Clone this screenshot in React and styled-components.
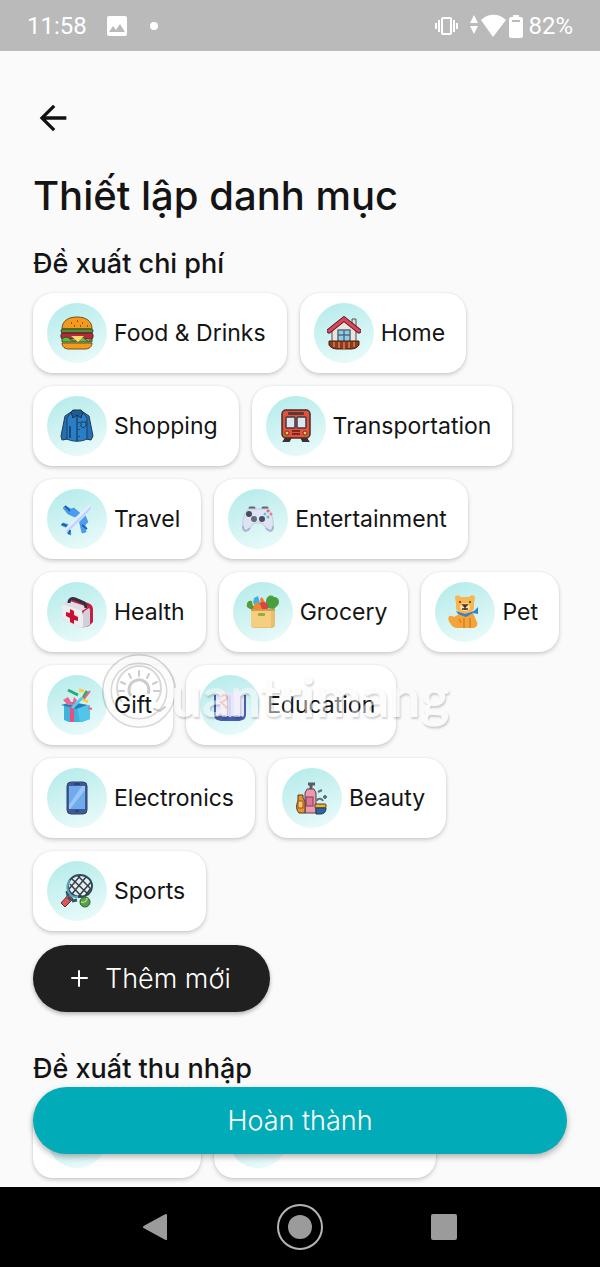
import styled, { createGlobalStyle } from 'styled-components';

const GlobalStyle = createGlobalStyle`
  * {
    box-sizing: border-box;
  }
  body {
    margin: 0;
    background: #fafafa;
    font-family: Inter, 'Liberation Sans', sans-serif;
    color: #141414;
  }
  svg {
    display: block;
    flex-shrink: 0;
  }
  button {
    font-family: inherit;
    border: none;
    cursor: pointer;
  }
`;

const Screen = styled.div`
  min-height: 100vh;
  display: flex;
  flex-direction: column;
`;

const StatusBar = styled.header`
  height: 51px;
  padding: 0 27px;
  display: flex;
  align-items: center;
  justify-content: space-between;
  background: #bababa;
  color: #fff;
  font-family: Roboto, sans-serif;
  font-size: 24px;
  font-weight: 400;
`;

const StatusGroup = styled.div`
  display: flex;
  align-items: center;
  gap: ${(props) => props.$gap}px;
`;

const Main = styled.main`
  position: relative;
  flex: 1;
  padding: 47px 33px 9px;
`;

const BackButton = styled.button`
  display: block;
  padding: 0;
  background: none;
  color: #111;
`;

const Title = styled.h1`
  margin: 34px 0 28px;
  font-size: 40px;
  line-height: 48px;
  font-weight: 450;
`;

const Section = styled.section`
  margin-bottom: ${(props) => (props.$last ? 0 : 41)}px;
`;

const SectionTitle = styled.h2`
  margin: 0 0 13px;
  font-size: 27px;
  line-height: 32px;
  font-weight: 450;
`;

const ChipList = styled.div`
  display: flex;
  flex-wrap: wrap;
  gap: 13px;
  margin-bottom: ${(props) => (props.$last ? 0 : 14)}px;
`;

const Chip = styled.button`
  display: flex;
  align-items: center;
  gap: 7px;
  height: 80px;
  min-width: ${(props) => props.$minWidth || 0}px;
  padding: 0 21px 0 14px;
  border-radius: 20px;
  background: #fff;
  box-shadow: 0 2px 4px rgba(0, 0, 0, 0.18), 0 0 2px rgba(0, 0, 0, 0.08);
  color: #141414;
  font-size: 23px;
`;

const IconCircle = styled.span`
  display: flex;
  align-items: center;
  justify-content: center;
  width: 60px;
  height: 60px;
  border-radius: 50%;
  background: linear-gradient(160deg, #b2ebea 0%, #cdf2f1 45%, #effcfc 100%);
`;

const AddButton = styled.button`
  display: flex;
  align-items: center;
  gap: 12px;
  height: 67px;
  padding: 0 39px 0 33px;
  border-radius: 34px;
  background: #202020;
  box-shadow: 0 2px 4px rgba(0, 0, 0, 0.3);
  color: #fff;
  font-size: 27px;
  font-weight: 350;
`;

const DoneButton = styled.button`
  position: absolute;
  left: 33px;
  right: 33px;
  bottom: 33px;
  height: 67px;
  border-radius: 34px;
  background: #02abb8;
  box-shadow: 0 3px 6px rgba(0, 0, 0, 0.3);
  color: #fff;
  font-size: 27px;
  font-weight: 350;
`;

const Watermark = styled.div`
  position: absolute;
  top: 602px;
  left: 101px;
  display: flex;
  align-items: center;
  pointer-events: none;
  opacity: 0.5;
`;

const WatermarkText = styled.span`
  margin-left: -6px;
  padding-top: 10px;
  font-family: Lato, sans-serif;
  font-size: 55px;
  line-height: 66px;
  font-weight: 700;
  color: #fafafa;
  text-shadow: 1px 2px 2px rgba(0, 0, 0, 0.35);
`;

const NavBar = styled.nav`
  height: 80px;
  display: flex;
  align-items: center;
  justify-content: center;
  gap: 96px;
  background: #000;
`;

const NavButton = styled.button`
  display: flex;
  padding: 0;
  background: none;
`;

const Burger = () => (
  <>
    <path d="M2 13C2 5 8 1 17 1s15 4 15 12z" fill="#f39a1d" stroke="#70501c" />
    <path d="M11 7h1M17 5h1M22 7h1M14 10h1M20 10h1M27 10h1" stroke="#704016" strokeWidth="1.5" />
    <rect x="1" y="13" width="32" height="4" rx="2" fill="#55903c" stroke="#294723" />
    <rect x="1" y="17" width="32" height="6" rx="2" fill="#b72936" stroke="#5f1d26" />
    <path d="M2 23q4-4 8 0t8 0 7 0 7 0v3H2z" fill="#62b845" stroke="#2d5824" />
    <path d="M11 20h13l-6 6z" fill="#ffd66a" />
    <path d="M2 27h30c0 4-3 6-7 6H9c-4 0-7-2-7-6z" fill="#f59a19" stroke="#70501c" />
  </>
);

const House = () => (
  <>
    <path d="M25 3h4v10h-4z" fill="#d7dce1" stroke="#555" />
    <path d="M5 14 17 4l12 10v14H5z" fill="#eee2dc" stroke="#514b4b" />
    <path d="M2 15 17 3l15 12" fill="none" stroke="#5b202c" strokeWidth="5" strokeLinecap="round" />
    <path d="M2 15 17 3l15 12" fill="none" stroke="#df4557" strokeWidth="3" strokeLinecap="round" />
    <rect x="11" y="14" width="12" height="12" fill="#8dcced" stroke="#536e7c" strokeWidth="1.5" />
    <path d="M17 14v12M11 19h12" stroke="#536e7c" strokeWidth="1.5" />
    <path d="M2 25h30v4c-2 3-5 4-8 4H10c-4 0-7-2-8-4z" fill="#873b20" stroke="#422015" />
    <path d="M7 26v5M12 26v6M17 26v7M22 26v6M27 26v5" stroke="#d26836" strokeWidth="2" />
  </>
);

const Shirt = () => (
  <>
    <path d="m11 3-6 4-4 20 1 4 6-1 2-16zM23 3l6 4 4 20-2 4-5-1-2-16z" fill="#2170b8" stroke="#25394e" />
    <path d="m11 3 6 4 6-4 4 6v21c-6 3-14 3-20 0V9z" fill="#287fc8" stroke="#233f58" />
    <path d="m11 3 2-2h8l2 2-2 6-4-3-4 3z" fill="#1c5c99" stroke="#1d3043" />
    <path d="M17 7v25" stroke="#17476f" strokeWidth="1.5" />
    <path d="M19 13v1M19 20v1M19 27v1M10 17v12" stroke="#173c5a" strokeWidth="1.5" />
    <path d="M21 13h5v4l-3 2-2-2z" fill="#2f86cc" stroke="#173c5a" />
  </>
);

const Bus = () => (
  <>
    <path d="m8 27-3 5h5l2-4M26 27l3 5h-5l-2-4" fill="#333" stroke="#333" strokeWidth="2" />
    <rect x="3" y="1" width="28" height="28" rx="4" fill="#e4503a" stroke="#472d2b" strokeWidth="1.5" />
    <rect x="9" y="3" width="16" height="3" rx="1" fill="#5b3833" />
    <rect x="7" y="8" width="9" height="11" rx="1" fill="#dce6f0" stroke="#423c40" strokeWidth="1.5" />
    <rect x="18" y="8" width="9" height="11" rx="1" fill="#dce6f0" stroke="#423c40" strokeWidth="1.5" />
    <circle cx="8" cy="24" r="2" fill="#ffd647" stroke="#5d3424" />
    <circle cx="26" cy="24" r="2" fill="#ffd647" stroke="#5d3424" />
    <path d="M13 22h8M13 25h8" stroke="#7e2723" strokeWidth="2" />
  </>
);

const Plane = () => (
  <>
    <path d="m15 15-7-3-5-6 2-2 6 3 3-1 7 6zM19 18l3 13 4-1-1-7 3-3-4-9zM7 26l-6-3 2-2 7 2zM10 27l1 6-3-1-2-6z" fill="#4b9df1" stroke="#3278c5" strokeWidth="0.5" />
    <path d="m7 24 20-20c2-2 5-2 5 0 0 2-1 4-3 6L11 28c-3 2-6 3-7 2 0-2 1-4 3-6z" fill="#e0ecff" />
    <path d="m5 30 26-26c1 2-1 4-3 6L10 28c-2 1-4 2-5 2z" fill="#bbd4fb" />
    <path d="m5 4 5 5M27 27l-5-4M2 22l5 2M9 32l1-4" stroke="#1764b5" strokeWidth="2" />
  </>
);

const Gamepad = () => (
  <>
    <path d="M9 6h4M22 6h4" stroke="#626778" strokeWidth="3" strokeLinecap="round" />
    <path d="M7 7h21c4 7 5 15 4 20-2 3-5 2-7-1l-4-5h-8l-4 5c-2 4-6 3-7 0C1 19 3 11 7 7z" fill="#dde3f2" stroke="#c3cbe0" />
    <path d="M2 24c0 6 4 6 7 2M25 26c3 4 7 4 7-2" fill="none" stroke="#a6b3d2" strokeWidth="2" />
    <circle cx="8" cy="12" r="3" fill="#474c5c" />
    <circle cx="13" cy="17" r="3" fill="#626a7e" />
    <circle cx="21" cy="17" r="3" fill="#474c5c" />
    <circle cx="27" cy="9" r="1.5" fill="#ed6572" />
    <circle cx="24" cy="12" r="1.5" fill="#5cc9d8" />
    <circle cx="30" cy="12" r="1.5" fill="#ea7ba2" />
    <circle cx="27" cy="15" r="1.5" fill="#6cbcb4" />
  </>
);

const FirstAid = () => (
  <>
    <path d="M14 3l14 5c3 1 5 3 5 6v13l-4 4-8 2V15L10 7z" fill="#c71f42" />
    <path d="M2 11c0-2 2-4 4-4l4-1 18 6-6 4v17l-3-1-15-7c-2-1-2-2-2-4z" fill="#dcdde5" />
    <path d="M2 11c0-1 1-2 3-1l15 5c2 1 3 3 3 5v13l-3-1-15-7c-2-1-3-2-3-4z" fill="#ececf1" />
    <path d="M23 20c0-3 1-4 3-5l3-2c1 1 1 2 1 4v13l-7 3z" fill="#cfd0d9" />
    <path d="M9 8c0-4 3-5 6-4l7 3c3 1 4 3 4 6" fill="none" stroke="#34313d" strokeWidth="3" />
    <path d="M10 14l4 2v4l4 2v4l-4-1v4l-4-2v-4l-4-2v-4l4 1z" fill="#c9112f" />
  </>
);

const GroceryBag = () => (
  <>
    <path d="M1 12c-1-5 2-7 5-6 0 4 2 6 5 8H4z" fill="#5a9838" />
    <path d="m8 3 4-2 2 7-3 4-4-4z" fill="#42afde" />
    <path d="m14 4 2-2 6 10h-7z" fill="#f47b31" />
    <path d="M20 7c0-6 5-8 8-5 5 0 6 5 4 8l-4 4-9-1z" fill="#499f3d" />
    <circle cx="17" cy="12" r="5" fill="#de4242" />
    <path d="M9 8c4-1 6 2 7 6H7z" fill="#f2872c" />
    <path d="M5 14h24v15c0 3-1 4-4 4H9c-3 0-4-1-4-4z" fill="#eabe70" />
    <path d="M5 14h20v18H9c-3 0-4-1-4-4z" fill="#f6ce82" />
    <path d="M5 15h24" stroke="#d49c50" strokeWidth="2" />
    <rect x="12" y="18" width="7" height="3" rx="1" fill="#9cab38" />
  </>
);

const Dog = () => (
  <>
    <path d="M6 22c-6-4-7 2-4 6 2 4 5 5 8 5h16c3-1 4-3 3-6l-4-9H13z" fill="#f4a43b" />
    <path d="M16 23v10M22 23v10M11 24l2 4" stroke="#d98022" strokeWidth="1.5" />
    <path d="M7 3c0-4 4-3 6-1h8c3-3 6-2 6 1l-1 5v6c-3 6-15 6-18 0V8z" fill="#f9b64c" />
    <ellipse cx="17" cy="12" rx="5" ry="4" fill="#ffe1a3" />
    <path d="M12 6v2M22 6v2M15 10h4l-2 2zM17 12v3M14 14h6" fill="#443238" stroke="#443238" strokeWidth="1.5" />
    <path d="m8 16 9 3 9-3 4-4v7l-5-1-7 4-8-3z" fill="#3482cf" />
  </>
);

const Gift = () => (
  <>
    <path d="m4 17 13 3 13-3v14l-8 3H9l-5-2z" fill="#3fb3dc" />
    <path d="m17 20 13-3v14l-10 3z" fill="#4fc6ea" />
    <path d="m1 17 11-3 16 3-12 4z" fill="#277fb8" />
    <path d="M10 19v15h4V19" fill="#ed4d7c" />
    <path d="m8 17-5-5 5-3 5 8M12 17l2-8 3 3-3 5" fill="#ef658d" />
    <path d="m8 2 10 5M27 3l-4 7" stroke="#2eaa78" strokeWidth="3" />
    <path d="m19 2 5 1M20 10l8 4" stroke="#ffcb43" strokeWidth="3" />
    <path d="m30 3-6 8M28 20l4 1" stroke="#ed6281" strokeWidth="2" />
    <path d="m12 20 10-10" stroke="#55cdee" strokeWidth="3" />
  </>
);

const Book = () => (
  <>
    <path d="M1 7h32v19c0 5-3 7-9 7H10c-6 0-9-2-9-7z" fill="#4860a9" />
    <path d="M3 4c6-2 11-1 14 2v23c-4-2-9-2-13 0l-1-2zM31 4c-6-2-11-1-14 2v23c4-2 9-2 13 0l1-2z" fill="#e8e6fa" />
    <path d="M17 7v22" stroke="#c9c8ea" />
    <path d="M8 9c3-4 8-1 5 3l-5 2 6 6" fill="none" stroke="#e7a493" strokeWidth="2" />
  </>
);

const Phone = () => (
  <>
    <rect x="7" y="1" width="20" height="32" rx="4" fill="#405a96" stroke="#304471" />
    <path d="M9 5h16v23H9z" fill="#6fabed" />
    <path d="M25 5v4L10 28H9v-4L22 5z" fill="#99c6f3" />
    <path d="M14 3h6M15 30h4" stroke="#263d70" strokeWidth="1.5" />
  </>
);

const Cosmetics = () => (
  <>
    <path d="M13 3h7M16 2v6" fill="none" stroke="#5c5961" strokeWidth="3" />
    <path d="M12 8h7l2 4v20H10V12z" fill="#ec99aa" stroke="#594049" />
    <rect x="11" y="16" width="7" height="9" fill="#d87797" stroke="#823a61" />
    <path d="M3 14h5v3l2 3v12H4c-3-3-3-8-1-12z" fill="#e9942c" stroke="#54391d" />
    <rect x="3" y="20" width="5" height="7" fill="#ffc268" stroke="#8b5620" />
    <rect x="20" y="23" width="11" height="4" rx="1" fill="#efb432" stroke="#503b21" />
    <path d="M21 27h10c0 5-3 6-6 6h-4z" fill="#2b65a6" stroke="#253a53" />
    <path d="M22 20c0-3 5-3 6 0M23 11l4-2M30 14v4M28 16h4" fill="none" stroke="#59737a" strokeWidth="2" />
  </>
);

const Racket = () => (
  <>
    <path d="m9 20 4 5-8 8-4-4z" fill="#e85052" stroke="#49383b" />
    <path d="m8 22-1-5M12 27l5-1M8 23l3 3" fill="none" stroke="#31546b" strokeWidth="3" />
    <ellipse cx="20" cy="12" rx="12" ry="11" fill="#e6edee" stroke="#285062" strokeWidth="2" />
    <path d="M10 10 22 23M12 5l17 16M18 2l13 13M9 15 20 2M12 20 26 3M18 23 31 8M25 22l6-8" stroke="#353e48" strokeWidth="1.5" />
    <path d="M10 6C4 14 9 24 18 23" fill="none" stroke="#5ba7be" strokeWidth="2" />
    <circle cx="25" cy="28" r="5" fill="#54a348" stroke="#325933" />
    <path d="M21 28c4 1 6-1 6-4" fill="none" stroke="#b5d674" strokeWidth="1.5" />
  </>
);

const expenseCategories = [
  { name: 'Food & Drinks', Icon: Burger },
  { name: 'Home', Icon: House },
  { name: 'Shopping', Icon: Shirt },
  { name: 'Transportation', Icon: Bus },
  { name: 'Travel', Icon: Plane },
  { name: 'Entertainment', Icon: Gamepad },
  { name: 'Health', Icon: FirstAid },
  { name: 'Grocery', Icon: GroceryBag },
  { name: 'Pet', Icon: Dog },
  { name: 'Gift', Icon: Gift },
  { name: 'Education', Icon: Book },
  { name: 'Electronics', Icon: Phone },
  { name: 'Beauty', Icon: Cosmetics },
  { name: 'Sports', Icon: Racket },
];

const incomeWidths = [168, 222];

export default function App() {
  return (
    <>
      <GlobalStyle />
      <Screen>
        <StatusBar>
          <StatusGroup $gap={20}>
            <span>11:58</span>
            <svg width="20" height="20" viewBox="0 0 20 20">
              <rect width="20" height="20" rx="2" fill="#fff" />
              <path d="m2 16 4-6 3 4 4-6 5 8z" fill="#bababa" />
            </svg>
            <svg width="14" height="8" viewBox="0 0 14 8">
              <circle cx="7" cy="4" r="4" fill="#fff" />
            </svg>
          </StatusGroup>
          <StatusGroup $gap={5}>
            <svg width="89" height="24" viewBox="0 0 89 24" fill="#fff">
              <rect x="8" y="4" width="9" height="16" rx="1" fill="none" stroke="#fff" strokeWidth="2" />
              <path d="M4 6h2v12H4zM1 9h2v6H1zM19 6h2v12h-2zM22 9h2v6h-2z" />
              <path d="m40 1 4 8h-8zM40 20l4-8h-8z" />
              <path d="M47 6c7-7 18-7 25 0L59 23z" />
              <path d="M79 1h6v2h2c1 0 2 1 2 2v17c0 1-1 2-2 2H77c-1 0-2-1-2-2V5c0-1 1-2 2-2h2z" />
              <path d="M78 6h8v2h-8z" fill="#bababa" />
            </svg>
            <span>82%</span>
          </StatusGroup>
        </StatusBar>

        <Main>
          <BackButton aria-label="Quay lại">
            <svg width="40" height="40" viewBox="0 0 24 24">
              <path d="M20 11H7.8l5.6-5.6L12 4l-8 8 8 8 1.4-1.4L7.8 13H20z" fill="currentColor" />
            </svg>
          </BackButton>
          <Title>Thiết lập danh mục</Title>

          <Section>
            <SectionTitle>Đề xuất chi phí</SectionTitle>
            <ChipList>
              {expenseCategories.map(({ name, Icon }) => (
                <Chip key={name}>
                  <IconCircle>
                    <svg width="34" height="34" viewBox="0 0 34 34">
                      <Icon />
                    </svg>
                  </IconCircle>
                  {name}
                </Chip>
              ))}
            </ChipList>
            <AddButton>
              <svg width="27" height="27" viewBox="0 0 27 27">
                <path d="M13 6v15M6 13h15" stroke="#fff" strokeWidth="2" strokeLinecap="round" />
              </svg>
              Thêm mới
            </AddButton>
          </Section>

          <Section $last>
            <SectionTitle>Đề xuất thu nhập</SectionTitle>
            <ChipList $last>
              {incomeWidths.map((width) => (
                <Chip key={width} $minWidth={width}>
                  <IconCircle />
                </Chip>
              ))}
            </ChipList>
          </Section>

          <Watermark aria-hidden="true">
            <svg width="76" height="76" viewBox="0 0 76 76" fill="none">
              <circle cx="38" cy="38" r="32" stroke="#000" strokeOpacity="0.3" strokeWidth="10" />
              <circle cx="38" cy="38" r="32" stroke="#fafafa" strokeWidth="7" />
              <path d="M21 49a22 22 0 1 1 34 0" stroke="#000" strokeOpacity="0.3" strokeWidth="2" />
              <path d="M30 43a10 10 0 1 1 17-2" stroke="#000" strokeOpacity="0.4" strokeWidth="3" />
              <path d="M38 18v5M28 21l2 4M48 21l-2 4M20 29l4 2M56 29l-4 2M18 38h5M53 38h5M53 56l6 2 5-4" stroke="#000" strokeOpacity="0.4" strokeWidth="2" strokeLinecap="round" />
            </svg>
            <WatermarkText>uantrimang</WatermarkText>
          </Watermark>
          <DoneButton>Hoàn thành</DoneButton>
        </Main>

        <NavBar>
          <NavButton aria-label="Back">
            <svg width="48" height="48" viewBox="0 0 48 48">
              <path d="M34 12v24L12 24z" fill="#9b9b9b" stroke="#9b9b9b" strokeWidth="2" strokeLinejoin="round" />
            </svg>
          </NavButton>
          <NavButton aria-label="Home">
            <svg width="48" height="48" viewBox="0 0 48 48">
              <circle cx="24" cy="24" r="22" fill="none" stroke="#b5b5b5" strokeWidth="2" />
              <circle cx="24" cy="24" r="12" fill="#9b9b9b" />
            </svg>
          </NavButton>
          <NavButton aria-label="Recent apps">
            <svg width="48" height="48" viewBox="0 0 48 48">
              <rect x="11" y="11" width="26" height="26" rx="2" fill="#9b9b9b" />
            </svg>
          </NavButton>
        </NavBar>
      </Screen>
    </>
  );
}
